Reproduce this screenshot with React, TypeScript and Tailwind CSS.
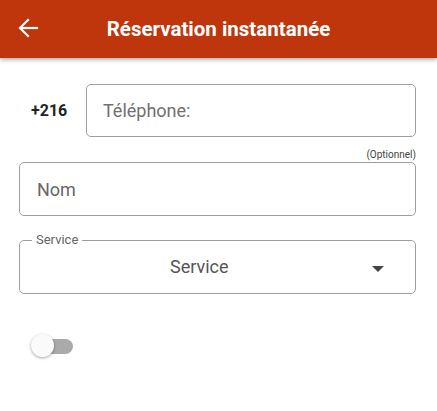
import React from "react";

export default function App() {
  return (
    <div className="w-[437px] h-[411px] bg-white overflow-hidden" style={{ fontFamily: "Roboto, 'Liberation Sans', sans-serif" }}>
      <div className="relative h-[58px] bg-[#bf360c] flex items-center justify-center shadow-[0_2px_4px_rgba(0,0,0,0.3)]">
        <svg className="absolute left-[17px] top-[17px]" width="22" height="22" viewBox="0 0 22 22" fill="none" stroke="white" strokeWidth="2.2" strokeLinecap="square">
          <path d="M20 11H4" />
          <path d="M11 3 3 11l8 8" />
        </svg>
        <span className="text-white text-[20.5px] font-bold">Réservation instantanée</span>
      </div>

      <div className="flex items-center mt-[26px]">
        <span className="w-[86px] pl-[31px] text-[16px] font-bold text-[#222]">+216</span>
        <div className="w-[330px] h-[53px] border border-[#9e9e9e] rounded-[5px] flex items-center pl-[16px]">
          <span className="text-[18px] text-[#707070]">Téléphone:</span>
        </div>
      </div>

      <div className="w-[416px] text-right text-[10px] text-[#444] leading-[12px] mt-[12px]">(Optionnel)</div>

      <div className="ml-[19px] mt-[1px] w-[397px] h-[54px] border border-[#9e9e9e] rounded-[5px] flex items-center pl-[17px]">
        <span className="text-[18px] text-[#666]">Nom</span>
      </div>

      <fieldset className="ml-[19px] mt-[17px] w-[397px] h-[61px] border border-[#9e9e9e] rounded-[5px] relative px-0">
        <legend className="ml-[12px] px-[4px] text-[13px] leading-[14px] text-[#666]">Service</legend>
        <div className="flex items-center h-[38px]">
          <span className="ml-[150px] text-[18px] text-[#555]">Service</span>
          <svg className="absolute right-[31px] top-[19px]" width="12" height="6" viewBox="0 0 12 6" fill="#444">
            <path d="M0 0h12L6 6z" />
          </svg>
        </div>
      </fieldset>

      <div className="relative ml-[31px] mt-[40px] w-[44px] h-[24px]">
        <div className="absolute left-[11px] top-[5px] w-[31px] h-[15px] rounded-full bg-[#aaaaaa]" />
        <div className="absolute left-0 top-0 w-[23px] h-[23px] rounded-full bg-[#fafafa] shadow-[0_1px_3px_rgba(0,0,0,0.35)]" />
      </div>
    </div>
  );
}
